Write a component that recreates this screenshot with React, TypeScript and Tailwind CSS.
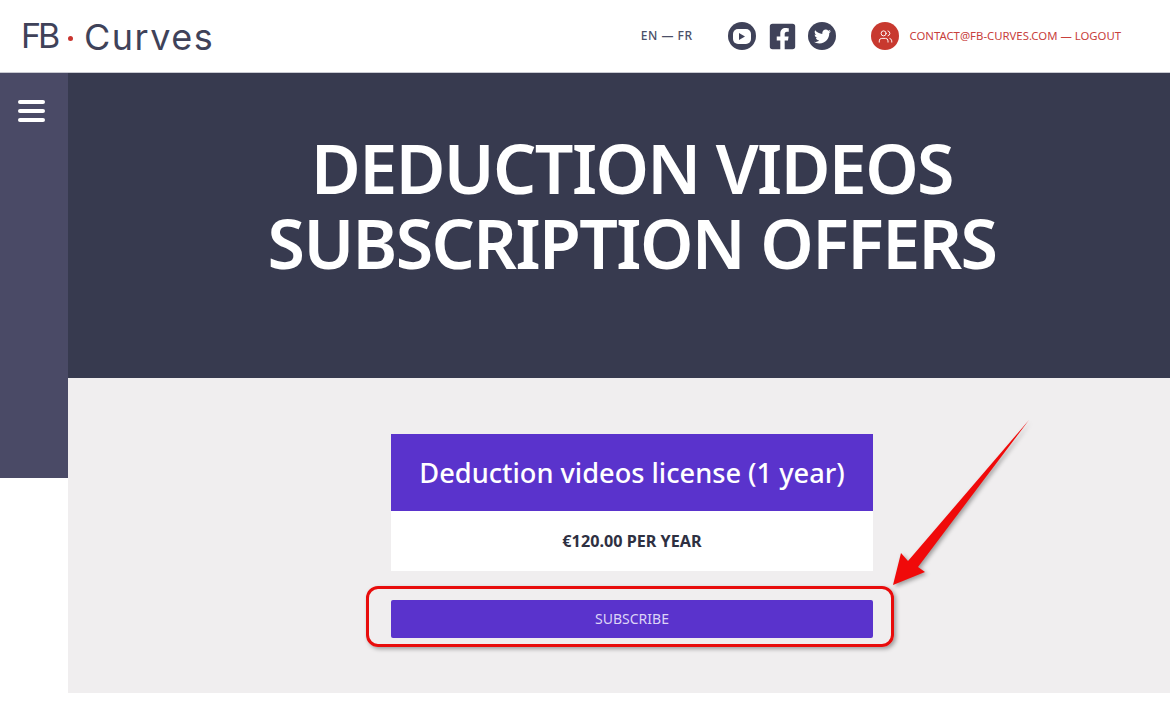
import { Users } from 'lucide-react';
import { FaFacebookSquare, FaTwitter } from 'react-icons/fa';

function Logo() {
  return (
    <div className="flex items-center font-['Inter',sans-serif] text-[#3f4259]">
      <span className="-ml-[1px] w-[35px] text-[34px] leading-none font-normal tracking-[-3px]">FB</span>
      <span className="mt-[5px] ml-[12px] h-[5px] w-[5px] rounded-full bg-[#c9352f]" />
      <span className="ml-[11px] pt-[2px] text-[36px] leading-none font-normal tracking-[1.5px]">Curves</span>
    </div>
  );
}

function Header() {
  return (
    <header className="flex h-[73px] items-center border-b border-[#c9cad2] bg-white pr-[49px] pl-[22px]">
      <Logo />
      <div className="ml-auto flex items-center text-[#4b4f68]">
        <span className="text-[12px] font-medium tracking-[0.5px]">EN — FR</span>
        <div className="ml-[36px] flex items-center gap-[11px]">
          <span className="mr-[1px] flex h-[28px] w-[28px] items-center justify-center rounded-full bg-[#3f4259]">
            <span className="flex h-[15px] w-[18px] items-center justify-center rounded-[5px] bg-white">
              <svg width="6" height="7" viewBox="0 0 7 8">
                <path d="M0 0 L7 4 L0 8 Z" fill="#3f4259" />
              </svg>
            </span>
          </span>
          <FaFacebookSquare size={29} color="#3f4259" />
          <span className="flex h-[28px] w-[28px] items-center justify-center rounded-full bg-[#3f4259]">
            <FaTwitter size={17} color="white" />
          </span>
        </div>
        <span className="ml-[35px] flex h-[28px] w-[28px] items-center justify-center rounded-full bg-[#c8392f]">
          <Users size={15} color="white" strokeWidth={1.5} />
        </span>
        <span className="ml-[10px] text-[11.35px] whitespace-nowrap text-[#c8403c]">
          CONTACT@FB-CURVES.COM — LOGOUT
        </span>
      </div>
    </header>
  );
}

function Sidebar() {
  return (
    <aside className="flex h-[405px] w-[68px] shrink-0 flex-col gap-[5px] bg-[#4a4a66] pt-[27px] pl-[18px]">
      <span className="h-[4px] w-[27px] rounded-full bg-white" />
      <span className="h-[4px] w-[27px] rounded-full bg-white" />
      <span className="h-[4px] w-[27px] rounded-full bg-white" />
    </aside>
  );
}

function Offer() {
  return (
    <div className="relative w-[482px]">
      <div className="flex h-[77px] items-center justify-center bg-[#5a33cc] pt-[1px] text-[27.2px] font-medium whitespace-nowrap text-white">
        Deduction videos license (1 year)
      </div>
      <div className="flex h-[60px] items-center justify-center bg-white text-[16.2px] font-bold text-[#2e3042]">
        €120.00 PER YEAR
      </div>
      <button
        type="button"
        className="relative mt-[29px] flex h-[38px] w-full items-center justify-center rounded-[2px] bg-[#5a33cc] pb-[1px] text-[14px] text-[#ddd3f7]"
      >
        SUBSCRIBE
        {/* Red annotation ring */}
        <span className="absolute top-[-14px] right-[-21px] bottom-[-9px] left-[-25px] rounded-[12px] border-[3px] border-[#e80c0c] shadow-[2px_2px_4px_rgba(0,0,0,0.35)]" />
      </button>
    </div>
  );
}

export default function App() {
  return (
    <div className="relative h-[715px] w-[1170px] overflow-hidden bg-white font-['Noto_Sans',sans-serif]">
      <Header />
      <div className="flex">
        <Sidebar />
        <main className="flex-1">
          <section className="flex h-[305px] justify-center bg-[#373a4f] pt-[57px] pl-[26px] text-center text-[68px] leading-[75px] font-semibold tracking-[-1.6px] text-white">
            <h1>
              DEDUCTION VIDEOS
              <br />
              SUBSCRIPTION OFFERS
            </h1>
          </section>
          <section className="flex h-[315px] justify-center bg-[#f0eeef] pt-[56px] pl-[26px]">
            <Offer />
          </section>
        </main>
      </div>
      {/* Red annotation arrow */}
      <svg className="absolute top-0 left-0 drop-shadow-[2px_2px_2px_rgba(0,0,0,0.35)]" width="1170" height="715">
        <path d="M893 585 L901 553 L908 561 L1029 420 L918 567 L925 572 Z" fill="#f00a0a" />
      </svg>
    </div>
  );
}
